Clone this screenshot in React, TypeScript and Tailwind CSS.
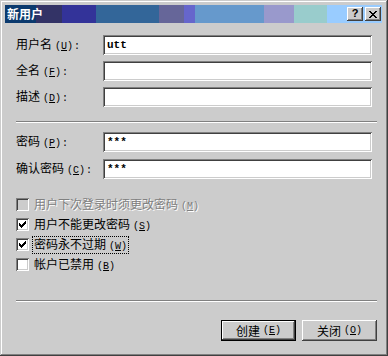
import React from "react";

const raised =
  "shadow-[inset_-1px_-1px_#404040,inset_1px_1px_#ffffff,inset_-2px_-2px_#808080,inset_2px_2px_#cccccc]";
const sunken =
  "shadow-[inset_1px_1px_#808080,inset_-1px_-1px_#ffffff,inset_2px_2px_#404040,inset_-2px_-2px_#cccccc]";

function Mn({ c }: { c: string }) {
  return (
    <span className="ml-[3px] font-['Liberation_Mono',monospace] text-[10px]">
      (<span className="underline underline-offset-1">{c}</span>)
    </span>
  );
}

function Field({ label, m, value }: { label: string; m: string; value?: string }) {
  return (
    <div className="flex items-center h-[20px]">
      <div className="w-[87px] text-[12px] leading-none">
        {label}
        <Mn c={m} />
        <span className="ml-[1px] font-['Liberation_Mono',monospace] text-[10px]">:</span>
      </div>
      <div className={`w-[269px] h-[20px] bg-white ${sunken} flex items-center pl-[4px]`}>
        {value && (
          <span className="font-['Liberation_Mono',monospace] text-[11px] font-bold leading-none">{value}</span>
        )}
      </div>
    </div>
  );
}

function Check() {
  const cols = [2, 3, 4, 3, 2, 1, 0];
  return (
    <svg width="7" height="7" viewBox="0 0 7 7" shapeRendering="crispEdges">
      {cols.map((y, x) => (
        <rect key={x} x={x} y={y} width="1" height="3" fill="#000" />
      ))}
    </svg>
  );
}

function CheckRow({
  label,
  m,
  checked,
  disabled,
  focus,
}: {
  label: string;
  m: string;
  checked?: boolean;
  disabled?: boolean;
  focus?: boolean;
}) {
  return (
    <div className="flex items-center h-[13px]">
      <div
        className={`w-[13px] h-[13px] ${disabled ? "bg-[#cccccc]" : "bg-white"} ${sunken} flex items-center justify-center`}
      >
        {checked && <Check />}
      </div>
      <div
        className={`ml-[4px] px-[1px] text-[12px] leading-none py-[1px] ${
          focus ? "outline outline-1 outline-dotted outline-black" : ""
        } ${disabled ? "text-[#808080] [text-shadow:1px_1px_0_#ffffff]" : "text-black"}`}
      >
        {label}
        <Mn c={m} />
      </div>
    </div>
  );
}

function Sep() {
  return <div className="h-[2px] border-t border-t-[#808080] border-b border-b-white" />;
}

export default function App() {
  const blocks: [number, string][] = [
    [31, "#0b3a6e"],
    [26, "#333366"],
    [34, "#333399"],
    [63, "#336699"],
    [25, "#666699"],
    [11, "#6666cc"],
    [69, "#6699cc"],
    [30, "#9999cc"],
    [33, "#99cccc"],
    [55, "#99ccff"],
  ];
  return (
    <div
      className={`w-[388px] h-[356px] bg-[#cccccc] pt-[5px] pl-[5px] pr-[6px] font-['Noto_Sans_CJK_SC',sans-serif] text-black shadow-[inset_-1px_-1px_#404040,inset_1px_1px_#cccccc,inset_-2px_-2px_#808080,inset_2px_2px_#ffffff] flex flex-col`}
    >
      <div className="relative h-[18px] flex">
        {blocks.map(([w, c], i) => (
          <div key={i} className="h-full" style={{ width: w, background: c }} />
        ))}
        <div className="absolute inset-0 flex items-center pl-[2px] pr-[1px]">
          <span className="text-white font-bold text-[12px] leading-none">新用户</span>
          <div className="ml-auto flex items-center">
            <div className={`w-[16px] h-[14px] bg-[#cccccc] ${raised} flex items-center justify-center`}>
              <span className="font-['Liberation_Sans',sans-serif] font-bold text-[11px] leading-none mt-[-1px]">?</span>
            </div>
            <div className={`ml-[2px] w-[16px] h-[14px] bg-[#cccccc] ${raised} flex items-center justify-center`}>
              <svg width="8" height="7" viewBox="0 0 8 7" shapeRendering="crispEdges">
                {[0, 1, 2, 3, 4, 5, 6].map((i) => (
                  <React.Fragment key={i}>
                    <rect x={i} y={i} width="2" height="1" fill="#000" />
                    <rect x={6 - i} y={i} width="2" height="1" fill="#000" />
                  </React.Fragment>
                ))}
              </svg>
            </div>
          </div>
        </div>
      </div>

      <div className="flex flex-col pl-[11px] pr-[5px]">
        <div className="flex flex-col gap-[6px] mt-[12px]">
          <Field label="用户名" m="U" value="utt" />
          <Field label="全名" m="F" />
          <Field label="描述" m="D" />
        </div>
        <div className="mt-[14px]">
          <Sep />
        </div>
        <div className="flex flex-col gap-[7px] mt-[9px]">
          <Field label="密码" m="P" value="***" />
          <Field label="确认密码" m="C" value="***" />
        </div>
        <div className="flex flex-col gap-[7px] mt-[19px]">
          <CheckRow label="用户下次登录时须更改密码" m="M" disabled />
          <CheckRow label="用户不能更改密码" m="S" checked />
          <CheckRow label="密码永不过期" m="W" checked focus />
          <CheckRow label="帐户已禁用" m="B" />
        </div>
        <div className="mt-[29px]">
          <Sep />
        </div>
        <div className="flex justify-end gap-[6px] mt-[18px]">
          <div className="w-[75px] h-[21px] border border-black bg-[#cccccc]">
            <div className={`w-full h-full ${raised} flex items-center justify-center text-[12px] leading-none`}>
              创建<Mn c="E" />
            </div>
          </div>
          <div className={`w-[75px] h-[21px] bg-[#cccccc] ${raised} flex items-center justify-center text-[12px] leading-none`}>
            关闭<Mn c="O" />
          </div>
        </div>
      </div>
    </div>
  );
}
